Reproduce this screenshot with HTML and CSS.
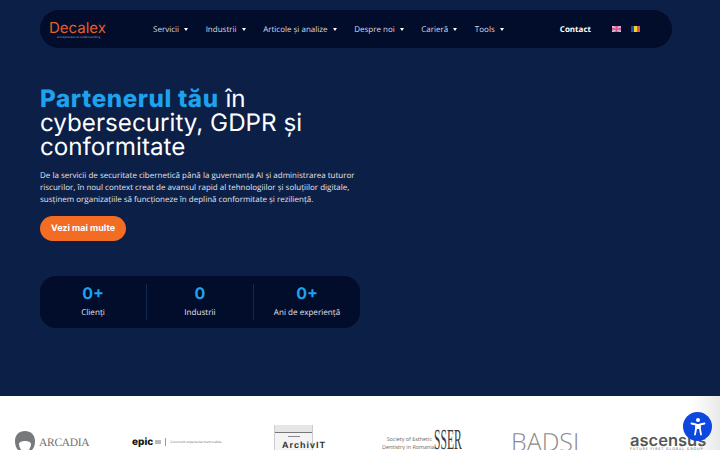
FILE: index.html
```html
<!DOCTYPE html>
<html lang="ro">
<head>
    <meta charset="UTF-8">
    <meta name="viewport" content="width=device-width, initial-scale=1.0">
    <title>Decalex</title>
    <link rel="stylesheet" href="styles.css">
</head>
<body>
    <section class="hero">
        <!-- Nav -->
        <header class="navbar">
            <a class="logo" href="#">
                <span class="logo-name">Decalex</span>
                <span class="logo-tag">entrepreneurial understanding</span>
            </a>
            <nav class="menu">
                <a href="#">Servicii <i class="caret"></i></a>
                <a href="#">Industrii <i class="caret"></i></a>
                <a href="#">Articole și analize <i class="caret"></i></a>
                <a href="#">Despre noi <i class="caret"></i></a>
                <a href="#">Carieră <i class="caret"></i></a>
                <a href="#">Tools <i class="caret"></i></a>
            </nav>
            <a class="contact" href="#">Contact</a>
            <div class="flags">
                <svg width="9" height="6" viewBox="0 0 9 6">
                    <rect width="9" height="6" fill="#c58ab4"/>
                    <path d="M0 0L9 6M9 0L0 6" stroke="#e9d3e2" stroke-width="1"/>
                    <path d="M4.5 0V6M0 3H9" stroke="#d1578f" stroke-width="1.4"/>
                </svg>
                <svg width="9" height="6" viewBox="0 0 9 6">
                    <rect width="3" height="6" fill="#1d4fa8"/>
                    <rect x="3" width="3" height="6" fill="#f6d32d"/>
                    <rect x="6" width="3" height="6" fill="#e2574c"/>
                </svg>
            </div>
        </header>

        <!-- Hero text -->
        <div class="intro">
            <h1><strong>Partenerul tău</strong> în cybersecurity, GDPR și conformitate</h1>
            <p>De la servicii de securitate cibernetică până la guvernanța AI și administrarea tuturor riscurilor, în noul context creat de avansul rapid al tehnologiilor și soluțiilor digitale, susținem organizațiile să funcționeze în deplină conformitate și reziliență.</p>
            <a class="btn" href="#">Vezi mai multe</a>
        </div>

        <!-- Stats -->
        <div class="stats">
            <div class="stat"><b>0+</b><span>Clienți</span></div>
            <div class="stat"><b>0</b><span>Industrii</span></div>
            <div class="stat"><b>0+</b><span>Ani de experiență</span></div>
        </div>
    </section>

    <!-- Logos -->
    <section class="partners">
        <div class="arcadia">
            <svg width="20" height="19" viewBox="0 0 20 19"><path d="M10 0C4 0 0 4 0 10c0 4 1 7 3 9h3c-1-2-2-4-2-6 0-2 3-3 6-3s6 1 6 3c0 2-1 4-2 6h3c2-2 3-5 3-9C20 4 16 0 10 0z" fill="#77797c"/></svg>
            <span>ARCADIA</span>
        </div>
        <div class="epic"><b>epic</b><em></em><i></i><span>Construim experiențe memorabile</span></div>
        <div class="archiv">
            <div class="archiv-box"><i></i></div>
            <span>ArchivIT</span>
        </div>
        <div class="sser"><span>Society of Esthetic<br>Dentistry in Romania</span><b>SSER</b></div>
        <div class="badsi">BADSI</div>
        <div class="ascensus"><b>ascensus</b><span>FUTURE FIRST GLOBAL GROUP</span></div>
    </section>

    <button class="a11y" aria-label="Accesibilitate">
        <svg width="16" height="20" viewBox="0 0 16 20" fill="none">
            <circle cx="8" cy="3" r="2" fill="#fff"/>
            <path d="M1.5 6.5L6 7.5V12L5 17.5M14.5 6.5L10 7.5V12L11 17.5" stroke="#fff" stroke-width="1.8" stroke-linecap="round" stroke-linejoin="round"/>
            <rect x="6" y="7" width="4" height="5" fill="#fff"/>
        </svg>
    </button>
</body>
</html>
```

FILE: styles.css
```css
body {
    margin: 0;
    height: 450px;
    overflow: hidden;
    background: #fff;
    font-family: "Open Sans", "Noto Sans", sans-serif;
    text-rendering: geometricPrecision;
    color: #fff;
    position: relative;
}

a {
    color: inherit;
    text-decoration: none;
}

.hero {
    height: 396px;
    box-sizing: border-box;
    padding: 10px 48px 0 40px;
    background: #0c1f47;
}

/* Nav */
.navbar {
    display: flex;
    align-items: center;
    height: 38px;
    padding: 0 32px 0 9px;
    border-radius: 19px;
    background: #020c2b;
}

.logo {
    display: flex;
    flex-direction: column;
    width: 104px;
    flex: none;
}

.logo-name {
    font-family: "Inter", sans-serif;
    font-size: 15px;
    line-height: 15px;
    color: #e0602a;
}

.logo-tag {
    font-size: 3px;
    line-height: 4px;
    color: #8fa5dc;
    margin-left: 8px;
    white-space: nowrap;
}

.menu {
    display: flex;
    gap: 17.5px;
    font-size: 8px;
    color: #d8dce6;
    white-space: nowrap;
}

.caret {
    display: inline-block;
    margin-left: 3px;
    vertical-align: 1px;
    border: 2.5px solid transparent;
    border-top: 3px solid #fff;
    border-bottom: 0;
}

.contact {
    margin-left: auto;
    font-size: 8px;
    font-weight: 700;
}

.flags {
    display: flex;
    gap: 10px;
    margin-left: 21px;
}

/* Hero text */
.intro {
    width: 320px;
    margin-top: 39px;
}

h1 {
    margin: 0;
    font-family: "Inter", sans-serif;
    font-size: 24.2px;
    font-weight: 400;
    line-height: 24px;
}

h1 strong {
    color: #1ea2ee;
    font-weight: 800;
    letter-spacing: 0.6px;
}

.intro p {
    margin: 11px 0 0;
    font-size: 8px;
    line-height: 12px;
    color: #e2e5ec;
}

.btn {
    display: inline-block;
    margin-top: 10px;
    width: 86px;
    height: 25px;
    line-height: 25px;
    text-align: center;
    border-radius: 13px;
    background: #f26c23;
    font-family: "Inter", sans-serif;
    font-size: 9px;
    font-weight: 700;
}

/* Stats */
.stats {
    display: flex;
    width: 320px;
    height: 52px;
    margin-top: 35px;
    padding: 8px 0;
    box-sizing: border-box;
    border-radius: 16px;
    background: #020c2b;
}

.stat {
    flex: 1;
    display: flex;
    flex-direction: column;
    align-items: center;
    border-left: 1px solid #14284f;
}

.stat:first-child {
    border-left: 0;
}

.stat b {
    font-family: "Inter", sans-serif;
    font-size: 16px;
    font-weight: 700;
    line-height: 18px;
    color: #1ea2ee;
}

.stat span {
    margin-top: 5px;
    font-size: 8.1px;
    line-height: 12px;
    color: #e2e5ec;
}

/* Logos */
.partners {
    display: grid;
    grid-template-columns: 117px 142px 108px 131px 117px 1fr;
    height: 54px;
    padding-left: 15px;
    overflow: hidden;
    background: linear-gradient(to right, #fff 96%, #e9e9e9);
    color: #6f7174;
}

.arcadia {
    display: flex;
    align-items: flex-end;
    gap: 4px;
    padding-top: 36px;
    height: 18px;
    font-family: "Liberation Serif", serif;
    font-size: 11.5px;
    letter-spacing: -0.3px;
    line-height: 14px;
    white-space: nowrap;
}

.arcadia svg {
    flex: none;
}

.epic {
    display: flex;
    align-items: center;
    height: 12px;
    margin-top: 40px;
    font-size: 3.2px;
    white-space: nowrap;
}

.epic b {
    font-family: "Inter", sans-serif;
    font-size: 10px;
    font-weight: 800;
    color: #111;
}

.epic em {
    width: 6px;
    height: 4px;
    margin-left: 2px;
    background: #bbb;
}

.epic i {
    width: 1px;
    height: 8px;
    margin: 0 4px;
    background: #999;
}

.archiv {
    padding-top: 29px;
    position: relative;
    font-family: "Liberation Sans", sans-serif;
    font-size: 9px;
    font-weight: 700;
    color: #333;
    white-space: nowrap;
}

.archiv-box {
    width: 39px;
    height: 25px;
    box-sizing: border-box;
    background: linear-gradient(#e6e6e6 7px, #777 7px, #777 8px, #f4f4f4 8px);
    border-left: 1px solid #ccc;
    border-right: 1px solid #ccc;
    display: flex;
    justify-content: center;
}

.archiv-box i {
    width: 12px;
    height: 1px;
    margin-top: 11px;
    background: #888;
}

.archiv span {
    position: absolute;
    left: 8px;
    top: 44px;
    letter-spacing: 1px;
}

.sser {
    display: flex;
    align-items: flex-start;
    padding-top: 39px;
    font-size: 5.4px;
    line-height: 8px;
    text-align: right;
    color: #666;
    white-space: nowrap;
}

.sser span {
    width: 50px;
    flex: none;
}

.sser b {
    margin: -7px 0 0 2px;
    font-family: "Liberation Serif", serif;
    font-size: 29px;
    font-weight: 400;
    line-height: 24px;
    color: #3a3a3a;
    width: 27px;
    transform: scaleX(0.4);
    transform-origin: left;
}

.badsi {
    margin-left: -2px;
    padding-top: 34px;
    font-size: 25px;
    font-weight: 300;
    line-height: 24px;
    color: #8a8a8a;
    white-space: nowrap;
}

.ascensus {
    padding-top: 37px;
    display: flex;
    flex-direction: column;
    white-space: nowrap;
}

.ascensus b {
    font-family: "Inter", sans-serif;
    font-size: 16.5px;
    font-weight: 600;
    line-height: 15px;
    color: #55575a;
}

.ascensus span {
    font-size: 3.6px;
    line-height: 4px;
    letter-spacing: 0.9px;
    color: #55575a;
}

.a11y {
    position: absolute;
    left: 683px;
    top: 412px;
    width: 29px;
    height: 29px;
    padding: 0;
    border: 0;
    border-radius: 50%;
    background: #0c47e0;
    display: flex;
    align-items: center;
    justify-content: center;
}
```
